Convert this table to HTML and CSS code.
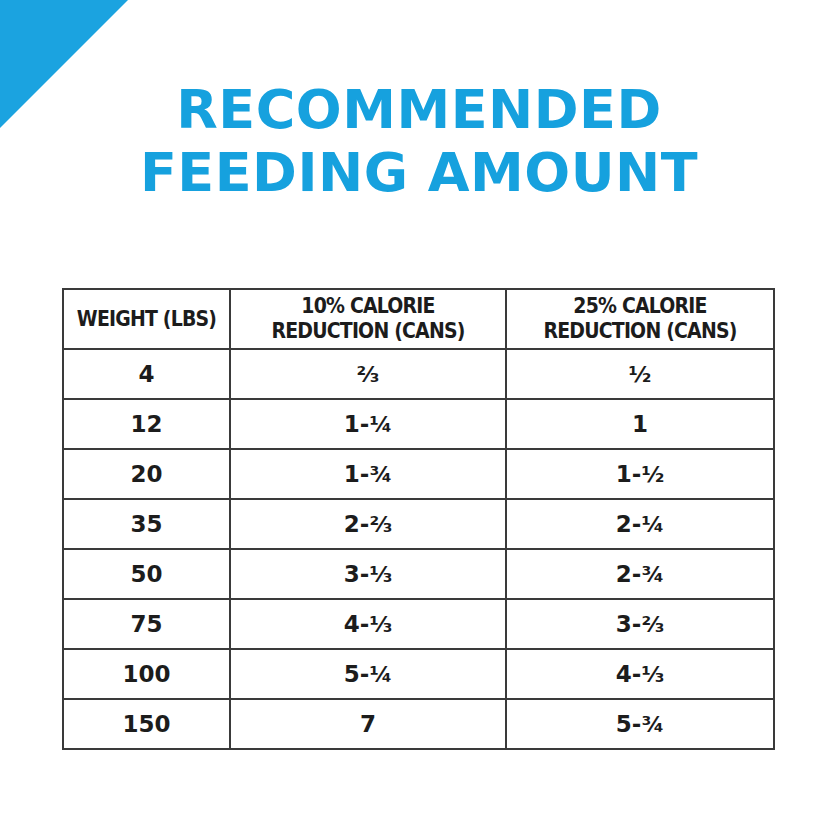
FILE: index.html
```html
<!DOCTYPE html>
<html>
<head>
<meta charset="utf-8">
<link rel="stylesheet" href="styles.css">
</head>
<body>
<div class="page">
  <div class="corner"></div>
  <h1 class="title">RECOMMENDED<br>FEEDING AMOUNT</h1>
  <table class="feed">
    <colgroup>
      <col class="c1"><col class="c2"><col class="c3">
    </colgroup>
    <thead>
      <tr>
        <th>WEIGHT (LBS)</th>
        <th>10% CALORIE<br>REDUCTION (CANS)</th>
        <th>25% CALORIE<br>REDUCTION (CANS)</th>
      </tr>
    </thead>
    <tbody>
      <tr><td>4</td><td><span class="fr">⅔</span></td><td><span class="fr">½</span></td></tr>
      <tr><td>12</td><td>1-<span class="fr">¼</span></td><td>1</td></tr>
      <tr><td>20</td><td>1-<span class="fr">¾</span></td><td>1-<span class="fr">½</span></td></tr>
      <tr><td>35</td><td>2-<span class="fr">⅔</span></td><td>2-<span class="fr">¼</span></td></tr>
      <tr><td>50</td><td>3-<span class="fr">⅓</span></td><td>2-<span class="fr">¾</span></td></tr>
      <tr><td>75</td><td>4-<span class="fr">⅓</span></td><td>3-<span class="fr">⅔</span></td></tr>
      <tr><td>100</td><td>5-<span class="fr">¼</span></td><td>4-<span class="fr">⅓</span></td></tr>
      <tr><td>150</td><td>7</td><td>5-<span class="fr">¾</span></td></tr>
    </tbody>
  </table>
</div>
</body>
</html>
```

FILE: styles.css
```css
html, body {
  margin: 0;
  padding: 0;
  background: #ffffff;
}
.page {
  position: relative;
  width: 838px;
  height: 838px;
  overflow: hidden;
  background: #ffffff;
  padding-top: 78px;
  box-sizing: border-box;
}
.corner {
  position: absolute;
  left: 0;
  top: 0;
  width: 128px;
  height: 128px;
  background: #1ba3e0;
  clip-path: polygon(0 0, 100% 0, 0 100%);
}
.title {
  margin: 0;
  text-align: center;
  font-family: "DejaVu Sans", "Liberation Sans", sans-serif;
  font-weight: 700;
  font-size: 54px;
  line-height: 63px;
  letter-spacing: 0.5px;
  color: #16a1de;
}
.feed {
  margin: 84px 0 0 62px;
  width: 711px;
  border-collapse: collapse;
  table-layout: fixed;
  color: #1c1c1c;
}
.c1 { width: 167px; }
.c2 { width: 276px; }
.c3 { width: 268px; }
.feed th, .feed td {
  border: 2px solid #3a3a3a;
  text-align: center;
  padding: 0;
}
.feed th {
  height: 58px;
  font-family: "DejaVu Sans", "Liberation Sans", sans-serif;
  font-stretch: condensed;
  font-weight: 700;
  font-size: 21px;
  line-height: 25px;
  letter-spacing: -0.8px;
}
.feed td {
  height: 48px;
  font-family: "DejaVu Sans", "Liberation Sans", sans-serif;
  font-weight: 700;
  font-size: 23px;
}
.fr {
  font-size: 22px;
  font-weight: 700;
}
```
